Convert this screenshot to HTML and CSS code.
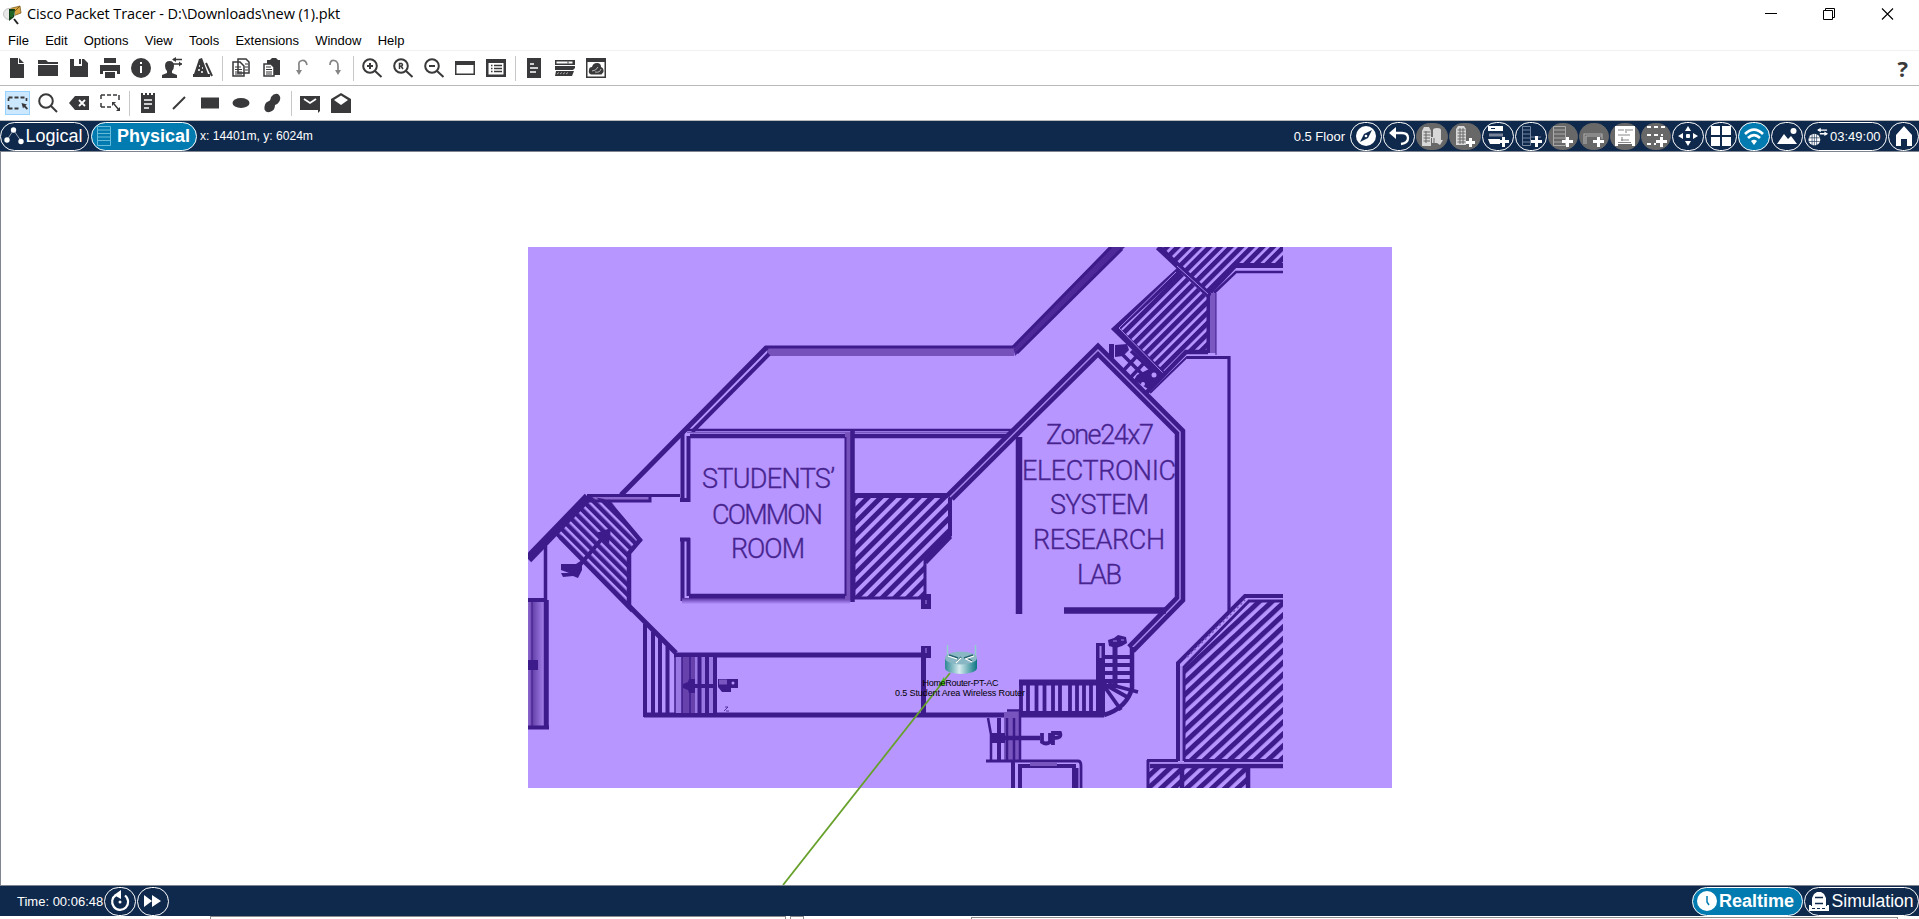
FILE: index.html
```html
<!DOCTYPE html>
<html lang="en">
<head>
<meta charset="utf-8">
<title>Cisco Packet Tracer</title>
<link rel="stylesheet" href="styles.css">
</head>
<body>
<div class="app">
<header class="titlebar">
  <svg class="app-icon" viewBox="0 0 20 20"><path d="M12 14l4 5" stroke="#222" stroke-width="2"/><path d="M6 4l12-3 1 7-8 3z" fill="#d9a441" stroke="#6b5116" stroke-width=".7"/><path d="M7 4l6 2 5-5" fill="none" stroke="#7b5c12"/><circle cx="7" cy="9" r="5.500" fill="#e8e8e8" stroke="#c5c5c5"/><path d="M7 4h6l-1 8-5 4z" fill="#123f18"/><path d="M8 7h4M8 9h4M8 11h3" stroke="#36a03a" stroke-width=".8"/></svg>
  <span class="title">Cisco Packet Tracer - D:\Downloads\new (1).pkt</span>
  <svg class="winctl" viewBox="0 0 140 29"><path d="M5 13.500h12" stroke="#000"/><path d="M63.500 10.500h9v9h-9zM65.500 10.500v-2h9v9h-2" fill="none" stroke="#000"/><path d="M122 8.500l11 11M133 8.500l-11 11" stroke="#000" stroke-width="1.100"/></svg>
</header>
<nav class="menu"><span>File</span><span>Edit</span><span>Options</span><span>View</span><span>Tools</span><span>Extensions</span><span>Window</span><span>Help</span></nav>
<div class="toolbar">
  <svg class="ic" viewBox="0 0 20 20"><path d="M3 0h8v6h6v14H3zM12 0l5 5h-5z"/></svg>
  <svg class="ic" viewBox="0 0 20 20"><path d="M0 2h8l2 2h10v2H0zM0 7h20v11H0z"/></svg>
  <svg class="ic" viewBox="0 0 20 20"><path d="M1 1h4v7h8V1h2l4 4v14H1z"/><path d="M10 1h2v5h-2z"/></svg>
  <svg class="ic" viewBox="0 0 20 20"><path d="M4 0h12v5H4zM0 7h20v9h-3v-3H3v3H0zM5 14h10v6H5z"/></svg>
  <svg class="ic" viewBox="0 0 20 20"><circle cx="10" cy="10" r="10"/><path d="M9 4h2v2H9zM9 8h2v7H9z" fill="#fff"/></svg>
  <svg class="ic" viewBox="0 0 20 20"><path d="M3 8q0-5 4.500-5T12 8q0 3-2 5v2l5 2v3H0v-3l5-2v-2q-2-2-2-5z"/><path d="M11 1.500h9M11 6h9" stroke="#39393b" stroke-width="1.500"/><path d="M14-1v5l-4-2.500zM17 3.500v5l3-2.500z"/></svg>
  <svg class="ic" viewBox="0 0 20 20"><path d="M6 1l3-1 6 16h2v3H0v-3h1z"/><path d="M13 5l6 13" stroke="#39393b" stroke-width="2"/><path d="M6 8h1M9 10h1M5 12h2M8 14h2" stroke="#fff" stroke-width="1.500"/></svg>
  <i class="sep"></i>
  <svg class="ic" viewBox="0 0 20 20"><path d="M7 1h8l3 3v11H7zM2 4h7l4 4v10H2z" fill="#fff" stroke="#39393b" stroke-width="1.500"/><path d="M4 9h6M4 11.500h7M4 14h7M4 16h7M14 6h3M14 9h3M14 12h3" stroke="#39393b" stroke-width="1.100"/></svg>
  <svg class="ic" viewBox="0 0 20 20"><path d="M5 2h3l2-2h4l2 2h2v15H5z"/><path d="M2 6h7l3 3v9H2z" fill="#fff" stroke="#39393b" stroke-width="1.500"/><path d="M4 9h5M4 11.500h6M4 14h6M4 16h6" stroke="#39393b" stroke-width="1.100"/></svg>
  <svg class="ic dim" viewBox="0 0 20 20"><path d="M14 7q-1-5-5-4.500T6 8v7" fill="none" stroke="#858585" stroke-width="1.700"/><path d="M3 12h6l-3 5z"/></svg>
  <svg class="ic dim" viewBox="0 0 20 20"><path d="M6 7q0-5 4-4.500T14 8v7" fill="none" stroke="#858585" stroke-width="1.700"/><path d="M11 12h6l-3 5z"/></svg>
  <i class="sep"></i>
  <svg class="ic ln" viewBox="0 0 20 20"><circle cx="8" cy="8" r="6.800"/><path d="M12.500 12.500l7 6.500M5 8h6M8 5v6"/></svg>
  <svg class="ic ln" viewBox="0 0 20 20"><circle cx="8" cy="8" r="6.800"/><path d="M12.500 12.500l7 6.500"/><path d="M6.500 11V5.500h2q2 1.200 0 2.700H7M8 8l2 3" stroke-width="1.500"/></svg>
  <svg class="ic ln" viewBox="0 0 20 20"><circle cx="8" cy="8" r="6.800"/><path d="M12.500 12.500l7 6.500M5 8h6"/></svg>
  <svg class="ic" viewBox="0 0 20 20"><path d="M0 3h20v14H0zM1.500 7v8.500h17V7z" fill-rule="evenodd"/></svg>
  <svg class="ic" viewBox="0 0 20 20"><path d="M0 1h20v18H0z"/><path d="M2.500 5h15v11.500h-15z" fill="#fff"/><path d="M5 7.500h1.500M5 10.500h1.500M5 13.500h1.500M8 7.500h8M8 10.500h8M8 13.500h8" stroke="#39393b" stroke-width="1.500"/></svg>
  <i class="sep"></i>
  <svg class="ic" viewBox="0 0 20 20"><path d="M3 0h14v20H3z"/><path d="M6 6h4M6 10h8M6 14h6" stroke="#fff" stroke-width="1.500"/></svg>
  <svg class="ic" viewBox="0 0 20 20"><path d="M0 2h20v5H0z"/><path d="M1.500 3.500h16v2h-16z" fill="#fff"/><path d="M13 3.500v2" stroke="#39393b"/><path d="M0 8h20v2l-2 2H0zM1 13h18l-2 5H0z"/><path d="M2 16l2-1.500M5 16l2-1.500M8 16l2-1.500M11 16l2-1.500" stroke="#aaa"/></svg>
  <svg class="ic" viewBox="0 0 20 20"><path d="M0 0h20v20H0z"/><path d="M1.500 4h17v14.500h-17z" fill="#fff"/><path d="M3 12q0-3 3-3 1-4 5-4t4 4q3 1 2.500 5l-2 2.500H5Q2 15 3 12z"/><path d="M6 13q4 0 6-4M9 14q5 1 6-3" fill="none" stroke="#bbb"/></svg>
  <b class="help">?</b>
</div>
<div class="toolbar second">
  <svg class="ic sel" viewBox="-2.500 -2 25 24"><path d="M1 4.500h18" stroke="#39393b" stroke-width="1.800" stroke-dasharray="4 2"/><path d="M1 15.500h12" stroke="#39393b" stroke-width="1.800" stroke-dasharray="4 2"/><path d="M1 5v3M1 12v4M19 5v3" stroke="#39393b" stroke-width="1.700"/><path d="M14 10l5.500 1.500-1.500 1 2.500 3-1.200 1.200-2.800-2.700-1 1.500z"/></svg>
  <svg class="ic ln" viewBox="0 0 20 20"><circle cx="8" cy="8" r="6.800"/><path d="M13 13l6 6"/></svg>
  <svg class="ic" viewBox="0 0 20 20"><path d="M6 3h14v14H6l-6-7z"/><path d="M10 7l6 6M16 7l-6 6" stroke="#fff" stroke-width="1.800"/></svg>
  <svg class="ic" viewBox="0 0 20 20"><path d="M1 2h18M1 14h10" stroke="#39393b" stroke-width="1.700" stroke-dasharray="4 2"/><path d="M1 2v4M1 10v4M19 2v5M14 11l5 6" stroke="#39393b" stroke-width="1.500"/><path d="M12 9h4l-4 4zM20 18h-4l4-4z"/></svg>
  <i class="sep"></i>
  <svg class="ic" viewBox="0 0 20 20"><path d="M3 0h2v2h2V0h2v2h2V0h2v2h2V0h2v20H3z"/><path d="M6 7h8M6 11h8M6 15h5" stroke="#fff" stroke-width="1.500"/></svg>
  <svg class="ic" viewBox="0 0 20 20"><path d="M4 16L16 4" stroke="#39393b" stroke-width="2"/></svg>
  <svg class="ic" viewBox="0 0 20 20"><path d="M1 4.500h18v11H1z"/></svg>
  <svg class="ic" viewBox="0 0 20 20"><ellipse cx="10" cy="10" rx="8.500" ry="5"/></svg>
  <svg class="ic" viewBox="0 0 20 20"><path d="M9 4q3-4 7-3 4 3 1 8-2 3-4 3 0 5-4 6.500-5 2-6.500-2Q2 10 6 8.500 8.500 8 9 4z"/></svg>
  <i class="sep"></i>
  <svg class="ic" viewBox="0 0 20 20"><path d="M0 3h20v15l-2 2v-3H0z"/><path d="M4 6l6 4 6-4" fill="none" stroke="#fff" stroke-width="1.800"/></svg>
  <svg class="ic" viewBox="0 0 20 20"><path d="M0 6l10-6 10 6v14H0z"/><path d="M3 7l7-4.500L17 7l-7 5z" fill="#fff"/></svg>
</div>

<div class="bar">
  <div class="pill logical"><svg viewBox="0 0 20 20"><path d="M3 14L9.500 4l7.500 11" fill="none" stroke="#fff" stroke-width=".8" stroke-opacity=".7"/><circle cx="3" cy="14" r="2.700"/><circle cx="9.500" cy="4" r="2.700"/><circle cx="17" cy="15.500" r="2.700"/></svg><span>Logical</span></div>
  <div class="pill physical"><svg viewBox="0 0 20 20"><path d="M3.500 .500h13v19h-13zM3.500 4h13M3.500 7.500h13M3.500 11h13M3.500 14.500h13" fill="none" stroke="#68bbd8"/></svg><span>Physical</span></div>
  <span class="coords">x: 14401m, y: 6024m</span>
  <span class="floor">0.5 Floor</span>
  <div class="btn"><svg viewBox="0 0 22 22"><circle cx="11" cy="11" r="10"/><path d="M17 5l-4 8-8 4 4-8z" fill="#0f294c"/><circle cx="11" cy="11" r="1.300"/></svg></div>
  <div class="btn"><svg viewBox="0 0 22 22"><path d="M1 8l7-6v12z"/><path d="M6 8h8q6 0 6 5t-7 6" fill="none" stroke="#fff" stroke-width="2.300"/></svg></div>
  <div class="btn off"><svg class="pale" viewBox="0 0 22 22"><path d="M1 21V6l2-4h5l2 4v15z"/><path d="M2.500 7h7M2.500 10h7M2.500 13h7M2.500 16h7M5 6v12" stroke="#686868"/><path d="M12 5q0-2 4-2t4 2v10h2l-3 5-3-2H9v-6h3z"/><path d="M10.500 13v6M13 13v6" stroke="#686868"/></svg></div>
  <div class="btn off"><svg class="pale" viewBox="0 0 22 22"><path d="M2 20V4l2-3h6l2 3v16z"/><path d="M3.500 5h8M3.500 8h8M3.500 11h8M3.500 14h8M3.500 17h8M6 3v16M9 3v16" stroke="#686868"/><path d="M15 13h3v3h3v3h-3v3h-3v-3h-3v-3h3z" fill="#fff"/></svg></div>
  <div class="btn"><svg viewBox="0 0 22 22"><path d="M1 1h15v5H1zM1 14h12v5H3z"/><path d="M2 10h14" stroke="#7a8499" stroke-width="3"/><path d="M4 3.500h4" stroke="#0f294c"/><path d="M15 12h3v3h4v3h-4v4h-3v-4h-3v-3h3z"/></svg></div>
  <div class="btn"><svg viewBox="0 0 22 22"><path d="M2.500 1.500h8v19h-8zM2.500 5h8M2.500 9h8M2.500 13h8M2.500 17h8M11 12h10" fill="none" stroke="#7485a0"/><path d="M15 11h3v4h4v3h-4v4h-3v-4h-4v-3h4z"/></svg></div>
  <div class="btn off slim"><svg viewBox="0 0 22 22"><path d="M1.500 1.500h12v19h-12zM1.500 5h12M1.500 9h12M1.500 13h12M1.500 17h12" fill="none" stroke="#aaa"/><path d="M14 12h3v3h4v3h-4v4h-3v-4h-4v-3h4z"/></svg></div>
  <div class="btn off slim"><svg viewBox="0 0 22 22"><path d="M1 19V9h18v5M3 11h16M3 19v-8" fill="none" stroke="#aaa" stroke-width="1.200"/><path d="M14 12h3v3h4v3h-4v4h-3v-4h-4v-3h4z"/></svg></div>
  <div class="btn off slim"><svg viewBox="0 0 22 22"><path d="M1 1h20v20h-3v-2H4v2H1z"/><path d="M4 5h6M13 5h6M4 10h12M7 15h8M4 17.500h13M12 4v4M8 12v4" stroke="#888" stroke-width="1.100"/></svg></div>
  <div class="btn off slim"><svg viewBox="0 0 22 22"><path d="M2 2h19M2 10h16M2 19h9" stroke="#fff" stroke-width="2" stroke-dasharray="4 3"/><path d="M15 12h3v3h4v3h-4v4h-3v-4h-4v-3h4z"/></svg></div>
  <div class="btn"><svg viewBox="0 0 22 22"><path d="M11 1l3 5H8zM11 21l3-5H8zM1 11l5-3v6zM21 11l-5-3v6z"/><rect x="9" y="9" width="4" height="4" rx="1"/></svg></div>
  <div class="btn"><svg viewBox="0 0 22 22"><path d="M1 1h9v9H1zM12 1h9v9h-9zM1 12h9v9H1zM12 12h9v9h-9z"/></svg></div>
  <div class="btn on"><svg viewBox="0 0 22 22"><path d="M2 9q9-9 18 0M5 13q6-6 12 0" fill="none" stroke="#fff" stroke-width="2.600"/><path d="M8 16q3-2.500 6 0l-3 4z"/></svg></div>
  <div class="btn"><svg viewBox="0 0 22 22"><path d="M1 19l7-10 4 5 3-3 6 8z"/><circle cx="17.500" cy="6" r="3"/></svg></div>
  <div class="pill clock"><svg viewBox="0 0 22 22"><circle cx="7" cy="15" r="6.500"/><path d="M1 13h12M1 17h12M4.500 9v12M9.500 9v12M7 8v14" stroke="#0f294c" stroke-width=".7"/><path d="M11 4.500h10M13 8.500h8" stroke="#fff" stroke-width="1.500"/><path d="M14 2v5l-4-2.500zM18 6v5l4-2.500z"/></svg><span>03:49:00</span></div>
  <div class="btn home"><svg viewBox="0 0 22 22"><path d="M3 10l8-9 8 9v11h-5v-7H8v7H3z"/></svg></div>
</div>

<main class="stage">
<svg class="plan" viewBox="1 152 1918 733">
  <defs>
    <pattern id="ha" width="9" height="9" patternUnits="userSpaceOnUse" patternTransform="rotate(45)"><rect width="5" height="9" fill="#3e1b8b"/></pattern>
    <pattern id="hn" width="7.500" height="9" patternUnits="userSpaceOnUse" patternTransform="rotate(45)"><rect width="4.800" height="9" fill="#3e1b8b"/></pattern>
    <pattern id="hb" width="7" height="8" patternUnits="userSpaceOnUse" patternTransform="rotate(-45)"><rect width="4.500" height="8" fill="#3e1b8b"/></pattern>
    <pattern id="hc" width="8.700" height="9" patternUnits="userSpaceOnUse" patternTransform="rotate(47)"><rect width="5" height="9" fill="#3e1b8b"/></pattern>
    <linearGradient id="shade" x2="1"><stop offset="0" stop-color="#8c68cf"/><stop offset=".25" stop-color="#6541aa"/><stop offset="1" stop-color="#b491fa"/></linearGradient>
    <linearGradient id="under" x2="0" y2="1"><stop offset="0" stop-color="#5531a0"/><stop offset="1" stop-color="#b593ff"/></linearGradient>
    <linearGradient id="metal" x2="1"><stop offset="0" stop-color="#2f8795"/><stop offset=".45" stop-color="#d6ecef"/><stop offset="1" stop-color="#0c7583"/></linearGradient>
    <clipPath id="area"><rect x="528" y="247" width="864" height="541"/></clipPath>
  </defs>
  <rect x="528" y="247" width="864" height="541" fill="#b796ff"/>
  <g clip-path="url(#area)" class="walls">
    <!-- north corridor -->
    <rect x="767" y="346" width="247" height="10" fill="#7650bb"/>
    <path d="M766 347H1013" stroke-width="3"/>
    <path d="M1013 346L1109 247H1125L1015 356z" fill="#4c2898" stroke="none"/>
    <path d="M1013 347L1111 247M1017 353L1122 249" stroke-width="3"/>
    <path d="M767 347L684 431L621 495" class="line" stroke-width="5"/>
    <path d="M769 354L692 432" stroke-width="4"/>
    <!-- common room -->
    <path d="M683 430H1014" stroke-width="2.500"/>
    <path d="M687 432.500H1010" stroke="#7955c0" stroke-width="1"/>
    <path d="M690 436H1007" stroke-width="4.500"/>
    <path d="M682.500 431V502M688.500 436V502M680 500H690" stroke-width="4"/>
    <path d="M682.500 538V601M688.500 538V596M680 539.500H690" stroke-width="4"/>
    <rect x="682" y="598" width="168" height="6" fill="url(#under)"/>
    <path d="M689 596H850" stroke-width="4.500"/>
    <rect x="845" y="433" width="6" height="167" fill="#7650bb"/>
    <path d="M852.500 431V602" stroke-width="4.500"/>
    <path d="M845.500 437V596" stroke-width="2"/>
    <rect x="588" y="496" width="62" height="5" fill="#8c68cf"/>
    <path d="M587 495.500H680M588 501H650V497" class="line" stroke-width="3"/>
    <!-- centre stairwell -->
    <path d="M854 495H950V536L925 562V598H854z" fill="url(#ha)" stroke-width="3"/>
    <path d="M854 495.500H948" stroke-width="5"/>
    <path d="M950 536L925 562" stroke-width="6"/>
    <rect x="921" y="594" width="10" height="15" stroke="none"/><path d="M926 600v4" class="light"/>
    <rect x="921" y="646" width="10" height="12" stroke="none"/><path d="M926 648v5" class="light"/>
    <path d="M923.500 657V716" stroke-width="5"/>
    <path d="M674 655H923M644 715H1104" stroke-width="5"/>
    <!-- west stairs -->
    <path d="M587 496L610 500L642 541L629 553V607L553 533z" fill="url(#hb)" stroke="none"/>
    <path d="M588 497L528 559" stroke-width="9"/>
    <path d="M608 502L640 540L629 553V607L560 537" class="line" stroke-width="4.500"/>
    <path d="M628 605L676 653" stroke-width="5"/>
    <path d="M575 571L605 535" stroke-width="4"/><path d="M596 533l15-5-2 16z" stroke="none"/>
    <path d="M561 564h15l6-4v10l-4 8-5-2-10 1-2-4h8l-8-3z" stroke="none"/>
    <rect x="528" y="602" width="19" height="124" fill="url(#shade)"/>
    <path d="M545.500 546V728M547 600V728" stroke-width="3.500"/>
    <path d="M528 600H545M528 727.500H549" stroke-width="4"/>
    <path d="M532 602V726" stroke-width="1"/>
    <rect x="528" y="660" width="10" height="10" stroke="none"/>
    <!-- southwest stairs -->
    <rect x="675" y="657" width="40" height="56" fill="#9a78e4"/>
    <rect x="682" y="657" width="13" height="56" fill="#6742ad"/>
    <path d="M645 624V717M653 632V714M660 638V714M667.500 646V714M699.500 657V714M707 657V714M715 657V714" stroke-width="4"/>
    <path d="M675 655V714M682 657V714M690 657V714" stroke-width="1.500"/>
    <path d="M684 686H717" stroke-width="4"/><path d="M683 684l5-2 1-3h6v14h-6l-1-3-5-2z" stroke="none"/>
    <path d="M718 679h20v9h-7v4h-9l-4-5z" stroke="none"/><path d="M719 682h8" stroke="#7955c0" stroke-width="5"/><circle cx="733" cy="683" r="1.500" fill="#b796ff" stroke="none"/>
    <path d="M724 711l4-4-3 0M726 711h3" stroke-width=".8" class="line"/>
    <!-- laboratory -->
    <path d="M950 497L1098 350L1180 432V599L1131 649" class="line" stroke-width="10.500" stroke-linejoin="miter"/>
    <path d="M950 497L1098 350L1180 432V599L1131 649" class="light line" stroke-width="1.500"/>
    <path d="M950 498v38" stroke-width="4"/>
    <path d="M1019 437V614" stroke-width="6.500"/>
    <path d="M1064 610.500H1166" stroke-width="6.500"/>
    <!-- northeast wing -->
    <path d="M1160 247H1283V267H1235L1209 294z" fill="url(#hn)" stroke="none"/>
    <path d="M1178 270L1208 298V353H1186L1162 374L1115 329z" fill="url(#hn)" stroke="none"/>
    <path d="M1181 269L1116 329L1163 375" class="line" stroke-width="7"/>
    <path d="M1176 272L1119 328L1163 373" class="light line"/>
    <path d="M1158 247L1210 296" stroke-width="6"/><path d="M1177 266L1208 294" class="light"/>
    <path d="M1283 265.500H1235L1210 292" class="line" stroke-width="5"/>
    <path d="M1283 272H1236L1214 293" class="line" stroke-width="2.500"/>
    <rect x="1211" y="293" width="5" height="60" fill="#7b57c2"/><path d="M1208.500 295V353" stroke-width="4"/><path d="M1216 293V355" stroke-width="1"/>
    <path d="M1208 352H1186L1146 393" class="line" stroke-width="4.500"/>
    <path d="M1216 357H1187L1150 393" class="line" stroke-width="2"/>
    <path d="M1187 357.500H1229V612" class="line" stroke-width="3.200"/>
    <rect x="1109" y="344" width="5" height="14" stroke="none"/>
    <path d="M1115 345l12-1 2 6-6 6-8 1zM1137 375l12-6 14 4-15 16-14-9z" stroke="none"/>
    <path d="M1120 352L1152 384M1131 351L1160 378M1124 370L1136 357M1131 377L1144 363" stroke-width="3.500"/>
    <circle cx="1154" cy="375" r="2.500" fill="#b796ff" stroke="none"/><circle cx="1143" cy="384" r="2" fill="#b796ff" stroke="none"/>
    <!-- south stairs -->
    <path d="M1019 682.500H1103M1019 714H1103" stroke-width="6"/>
    <path d="M1021 680V717M1028 683V714M1036.500 683V714M1044.500 683V714M1053 683V714M1060 683V714M1070 683V714M1077 683V714M1084 683V714M1091 683V714" stroke-width="3.800"/>
    <path d="M1096 643h9v70h-9z" stroke="none"/><path d="M1100.500 646v12" class="light" stroke-width="2"/>
    <path d="M1132 647V688Q1127 708 1104 715" class="line" stroke-width="4.500"/>
    <path d="M1104 657H1132M1104 665H1132M1104 673H1132M1104 681H1132M1104 686L1121 710M1104 684L1129 698M1108 684L1138 692" stroke-width="3.800"/>
    <path d="M1115 646V688" stroke-width="5"/>
    <path d="M1108 640l6-2 4-3 8 2 1 6-5 3-6 2-7-2z" stroke="none"/><path d="M1113 641h4M1121 640h3" class="light"/>
    <!-- lower exit -->
    <rect x="1004" y="712" width="16" height="49" fill="#7854bf"/>
    <path d="M1007 710.500H1021M1020 712V762M1014 718V760M1007 718V760M999 718V760M991 735V760M988 718L992 740" stroke-width="2.500"/>
    <path d="M999 718V760" stroke-width="4"/>
    <path d="M991 738H1040" stroke-width="4.500"/><rect x="990" y="733" width="15" height="10" stroke="none"/>
    <path d="M1042 733v9q4 3 8 0v-9M1053 745v-12h7q2 5-6 5" class="line" stroke-width="3.800"/>
    <path d="M986 761H1078Q1081 761 1081 766V788" class="line" stroke-width="2.800"/>
    <path d="M1013 762V788M1020 788V766H1074V788" class="line" stroke-width="4"/>
    <path d="M1076 768V788" stroke-width="5"/>
    <path d="M1030 764H1057" stroke="#7955c0" stroke-width="4"/>
    <!-- east hall -->
    <path d="M1184 664L1249 600H1283V760H1184z" fill="url(#hc)" stroke="none"/>
    <path d="M1283 596H1245L1178 663V761" class="line" stroke-width="4"/>
    <path d="M1283 601H1249L1184 667V761" class="line" stroke-width="3"/>
    <path d="M1187 657L1245 600" stroke="#7854bf" stroke-width="2" stroke-dasharray="2 3"/>
    <rect x="1147" y="767" width="103" height="21" fill="url(#hc)" stroke="none"/>
    <path d="M1147 760.500H1178M1184 760.500H1283M1148 760V788" stroke-width="3"/>
    <path d="M1150 766H1283M1182 766V788M1248 766V788" stroke-width="4.500"/>
    <path d="M1181 666V762M1150 763H1283" class="light" stroke-width="1.500"/>
    <g class="room">
      <text x="702" y="488" textLength="133">STUDENTS’</text>
      <text x="712" y="524" textLength="111">COMMON</text>
      <text x="731" y="558" textLength="74">ROOM</text>
      <text x="1046" y="444" textLength="108">Zone24x7</text>
      <text x="1022" y="480" textLength="154">ELECTRONIC</text>
      <text x="1050" y="514" textLength="99">SYSTEM</text>
      <text x="1033" y="549" textLength="132">RESEARCH</text>
      <text x="1077" y="584" textLength="45">LAB</text>
    </g>
  </g>
  <!-- router and link -->
  <path d="M783 885L950 673" stroke="#67a12b" stroke-width="1.800"/>
  <path d="M944 677l1 8-7 1z" fill="#48c51b"/>
  <path d="M947.500 645V661M975.500 645V661" stroke="#8fd0cc" stroke-width="1.500"/>
  <path d="M945 658v10a16 6 0 0 0 32 0v-10z" fill="url(#metal)"/>
  <ellipse cx="961" cy="658" rx="16" ry="6.500" fill="#8ab7c4"/>
  <path d="M949 655l9 3M973 655l-9 3M957 662l4-5M972 661l-6-3" stroke="#23616c" stroke-width="1.500"/>
  <path d="M948 656l9 3M974 656l-9 3M956 663l5-5M972 662l-6-3" stroke="#fff" stroke-width="1.200"/>
  <g class="device"><text x="960.500" y="686" textLength="76">HomeRouter-PT-AC</text><text x="960" y="696" textLength="130">0.5 Student Area Wireless Router</text></g>
</svg>
</main>

<footer class="bar foot">
  <span class="time">Time: 00:06:48</span>
  <div class="btn"><svg viewBox="0 0 22 22"><path d="M7 5a8 8 0 1 0 9 .500" fill="none" stroke="#fff" stroke-width="2.200"/><path d="M5 5l7-5v9z"/><circle cx="11" cy="12" r="1.500"/></svg></div>
  <div class="btn"><svg viewBox="0 0 22 22"><path d="M2 5l8 6-8 6zM10 5l9 6-9 6z"/></svg></div>
  <div class="pill realtime"><svg viewBox="0 0 20 20"><circle cx="10" cy="10" r="10"/><path d="M10 5v6l2 3" fill="none" stroke="#027cb0" stroke-width="1.500"/></svg><span>Realtime</span></div>
  <div class="pill simulation"><svg viewBox="0 0 20 20"><path d="M5 3l3-2h4l3 2 2 4v8h1v-1h2v6H0v-6h2v1h1V7z"/><path d="M6 6.500h8M6 12.500h8" stroke="#0f294c" stroke-width="1.300"/><path d="M3 17.500h14" stroke="#0f294c" stroke-width="1" stroke-dasharray="3 2"/></svg><span>Simulation</span></div>
</footer>
<div class="dock"><i class="pane one"></i><i class="pane two"></i><i class="pane three"></i></div>
</div>
</body>
</html>
```

FILE: styles.css
```css
* { box-sizing: border-box; }
body { margin: 0; overflow: hidden; background: #fff; color: #000; font-family: "Liberation Sans", Arial, sans-serif; }
.app { width: 1919px; height: 919px; display: flex; flex-direction: column; }
svg { display: block; flex: none; }

.titlebar { height: 29px; display: flex; align-items: center; padding-left: 2px; }
.app-icon { width: 20px; height: 20px; }
.title { margin-left: 5px; padding-bottom: 2px; font: 14.500px/27px "Open Sans", "Noto Sans", sans-serif; letter-spacing: -.1px; white-space: nowrap; }
.winctl { width: 140px; height: 29px; margin-left: auto; margin-right: 19px; }

.menu { height: 22px; display: flex; gap: 16.200px; padding: 4px 0 0 8px; border-bottom: 1px solid #f0f0f0; font-size: 13px; line-height: 15px; }

.toolbar { height: 35px; display: flex; align-items: center; padding-left: 1.500px; border-bottom: 1px solid #b9b9b9; }
.ic { width: 20px; height: 20px; margin: 0 5.500px; fill: #39393b; overflow: visible; }
.ic.dim { fill: #858585; }
.ic.ln { fill: none; stroke: #39393b; stroke-width: 2; }
.ic.sel { width: 25px; height: 24px; margin: 0 3px; background: #cce8ff; outline: 1px solid #99d1ff; outline-offset: -1px; }
.sep { width: 1px; height: 25px; margin: 0 3px; background: #c8c8c8; }
.help { margin: 0 11px 0 auto; font: bold 22px/30px "Open Sans", sans-serif; color: #39393b; }

.bar { height: 30px; flex: none; display: flex; align-items: center; gap: 1px; background: #0f294c; color: #fff; font-size: 13px; }
.bar svg { width: 22px; height: 22px; fill: #fff; }
.bar svg.pale { fill: #d8d8d8; }
.btn { width: 32px; height: 29px; flex: none; display: flex; align-items: center; justify-content: center; border: 1px solid #fff; border-radius: 14.500px; }
.btn.off { height: 27px; background: #686868; border-color: #686868; }
.btn.slim { width: 30px; }
.btn.on { background: #027cb0; }
.btn.home { width: 31px; }
.pill { height: 29px; flex: none; display: flex; align-items: center; border: 1px solid #fff; border-radius: 14.500px; font-size: 18px; white-space: nowrap; }
.bar .pill svg { width: 20px; height: 20px; }
.logical { width: 89px; padding-left: 3px; gap: 1.500px; }
.physical { width: 106px; margin-left: 1px; padding-left: 2px; gap: 3px; background: #027cb0; font-weight: bold; }
.coords { margin-left: 2px; font-size: 12.100px; }
.floor { margin-left: auto; margin-right: 4px; }
.bar .clock { width: 83px; padding-left: 3px; gap: 2px; font-size: 13px; }

.stage { height: 735px; flex: none; border: solid #7f8590; border-width: 1px 0 1px 1px; }
.plan { width: 1918px; height: 733px; }
.walls { fill: #3e1b8b; stroke: none; }
.walls path { stroke: #3e1b8b; }
.walls path[stroke="none"] { stroke: none; }
.walls path[stroke^="#7"] { stroke: #7955c0; }
.walls .line { fill: none; }
.walls .light { stroke: #a585ec; }
.room { font: 300 27px Roboto, "Liberation Sans", sans-serif; fill: #47248f; stroke: #47248f; stroke-width: .35px; }
.device { font-size: 9px; fill: #000; text-anchor: middle; }

.foot { padding-left: 17px; }
.time { width: 86px; white-space: nowrap; }
.realtime { width: 111px; margin-left: auto; padding-left: 4px; gap: 2px; background: #027cb0; font-weight: bold; }
.simulation { width: 115px; padding-left: 4px; gap: 2.500px; font-size: 17.600px; }
.dock { height: 3px; display: flex; }
.pane { height: 3px; border: solid #8b8b8b; border-width: 1px 1px 0; }
.one { width: 576px; margin-left: 210px; }
.two { width: 14px; margin-left: 4px; }
.three { width: 927px; margin: 1px 0 0 167px; }
```
